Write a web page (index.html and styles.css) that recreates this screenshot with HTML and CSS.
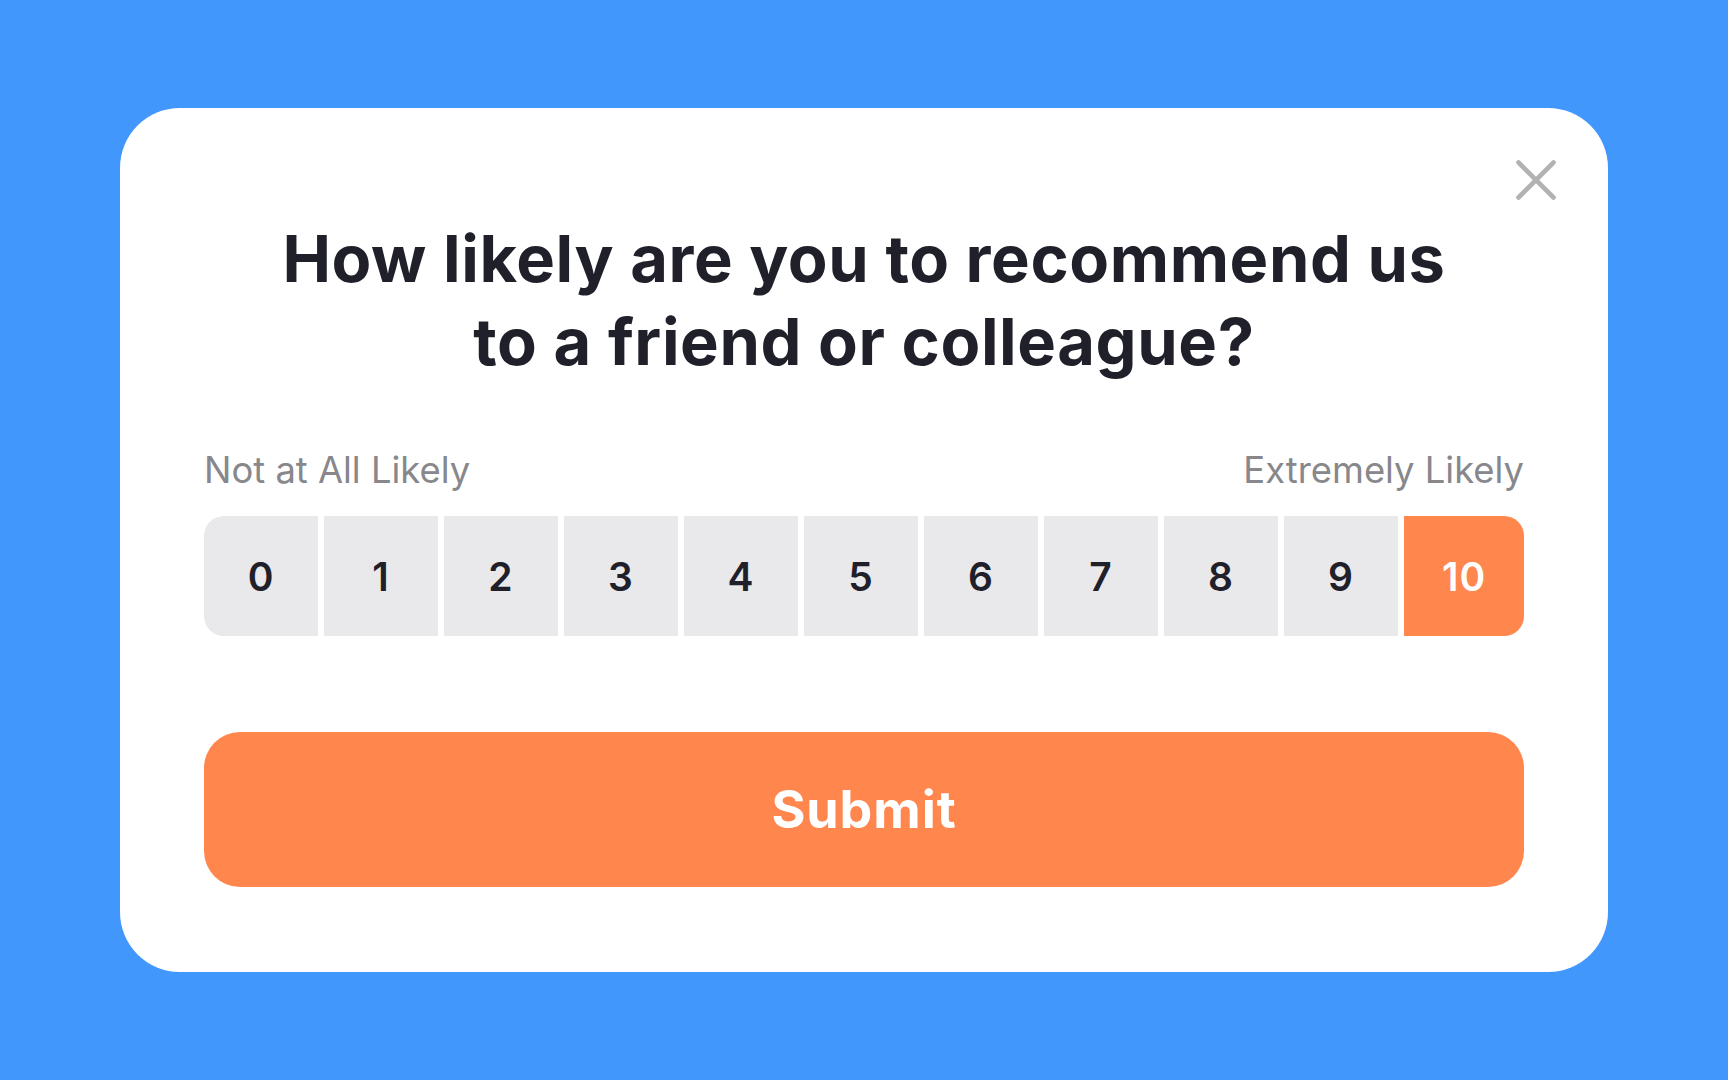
FILE: index.html
```html
<!DOCTYPE html>
<html lang="en">
<head>
<meta charset="utf-8">
<title>NPS Survey</title>
<link rel="stylesheet" href="styles.css">
</head>
<body>
<div class="card">
  <button class="close" aria-label="Close">
    <svg width="40" height="40" viewBox="0 0 40 40"><path d="M2.5 2.5 L37.5 37.5 M37.5 2.5 L2.5 37.5" stroke="#b2b2b4" stroke-width="4.6" stroke-linecap="round" fill="none"/></svg>
  </button>
  <h1 class="title">How likely are you to recommend us<br>to a friend or colleague?</h1>
  <div class="labels"><span>Not at All Likely</span><span>Extremely Likely</span></div>
  <div class="scale">
    <div class="cell">0</div>
    <div class="cell">1</div>
    <div class="cell">2</div>
    <div class="cell">3</div>
    <div class="cell">4</div>
    <div class="cell">5</div>
    <div class="cell">6</div>
    <div class="cell">7</div>
    <div class="cell">8</div>
    <div class="cell">9</div>
    <div class="cell selected">10</div>
  </div>
  <button class="submit">Submit</button>
</div>
</body>
</html>
```
FILE: styles.css
```css
* { box-sizing: border-box; }
html, body { margin: 0; padding: 0; }
body {
  width: 1728px;
  height: 1080px;
  background: #4297fd;
  display: flex;
  align-items: center;
  justify-content: center;
  font-family: Inter, "Noto Sans", sans-serif;
}
.card {
  position: relative;
  width: 1488px;
  height: 864px;
  background: #ffffff;
  border-radius: 60px;
  padding: 109px 84px 85px;
  display: flex;
  flex-direction: column;
}
.close {
  position: absolute;
  top: 52px;
  right: 52px;
  width: 40px;
  height: 40px;
  padding: 0;
  border: 0;
  background: none;
  display: block;
}
.close svg { display: block; }
.title {
  margin: 0;
  font-size: 65px;
  line-height: 83px;
  font-weight: 700;
  color: #1f2029;
  text-align: center;
  letter-spacing: 0.6px;
}
.labels {
  margin-top: 67px;
  display: flex;
  justify-content: space-between;
  font-size: 36.4px;
  line-height: 40px;
  color: #87878c;
}
.scale {
  margin-top: 26px;
  height: 120px;
  display: flex;
  gap: 6px;
}
.cell {
  flex: 0 0 114px;
  background: #e9e9eb;
  display: flex;
  align-items: center;
  justify-content: center;
  font-size: 39px;
  font-weight: 600;
  letter-spacing: 1px;
  color: #1f2029;
}
.cell:first-child { border-radius: 20px 0 0 20px; }
.cell:last-child { flex: 1 1 auto; border-radius: 0 20px 20px 0; }
.cell.selected { background: #ff864d; color: #ffffff; }
.submit {
  margin-top: 96px;
  height: 155px;
  border: 0;
  border-radius: 36px;
  background: #ff864d;
  color: #ffffff;
  font-family: Inter, "Noto Sans", sans-serif;
  font-size: 52px;
  font-weight: 700;
  letter-spacing: 0.9px;
  padding: 0;
}
```
